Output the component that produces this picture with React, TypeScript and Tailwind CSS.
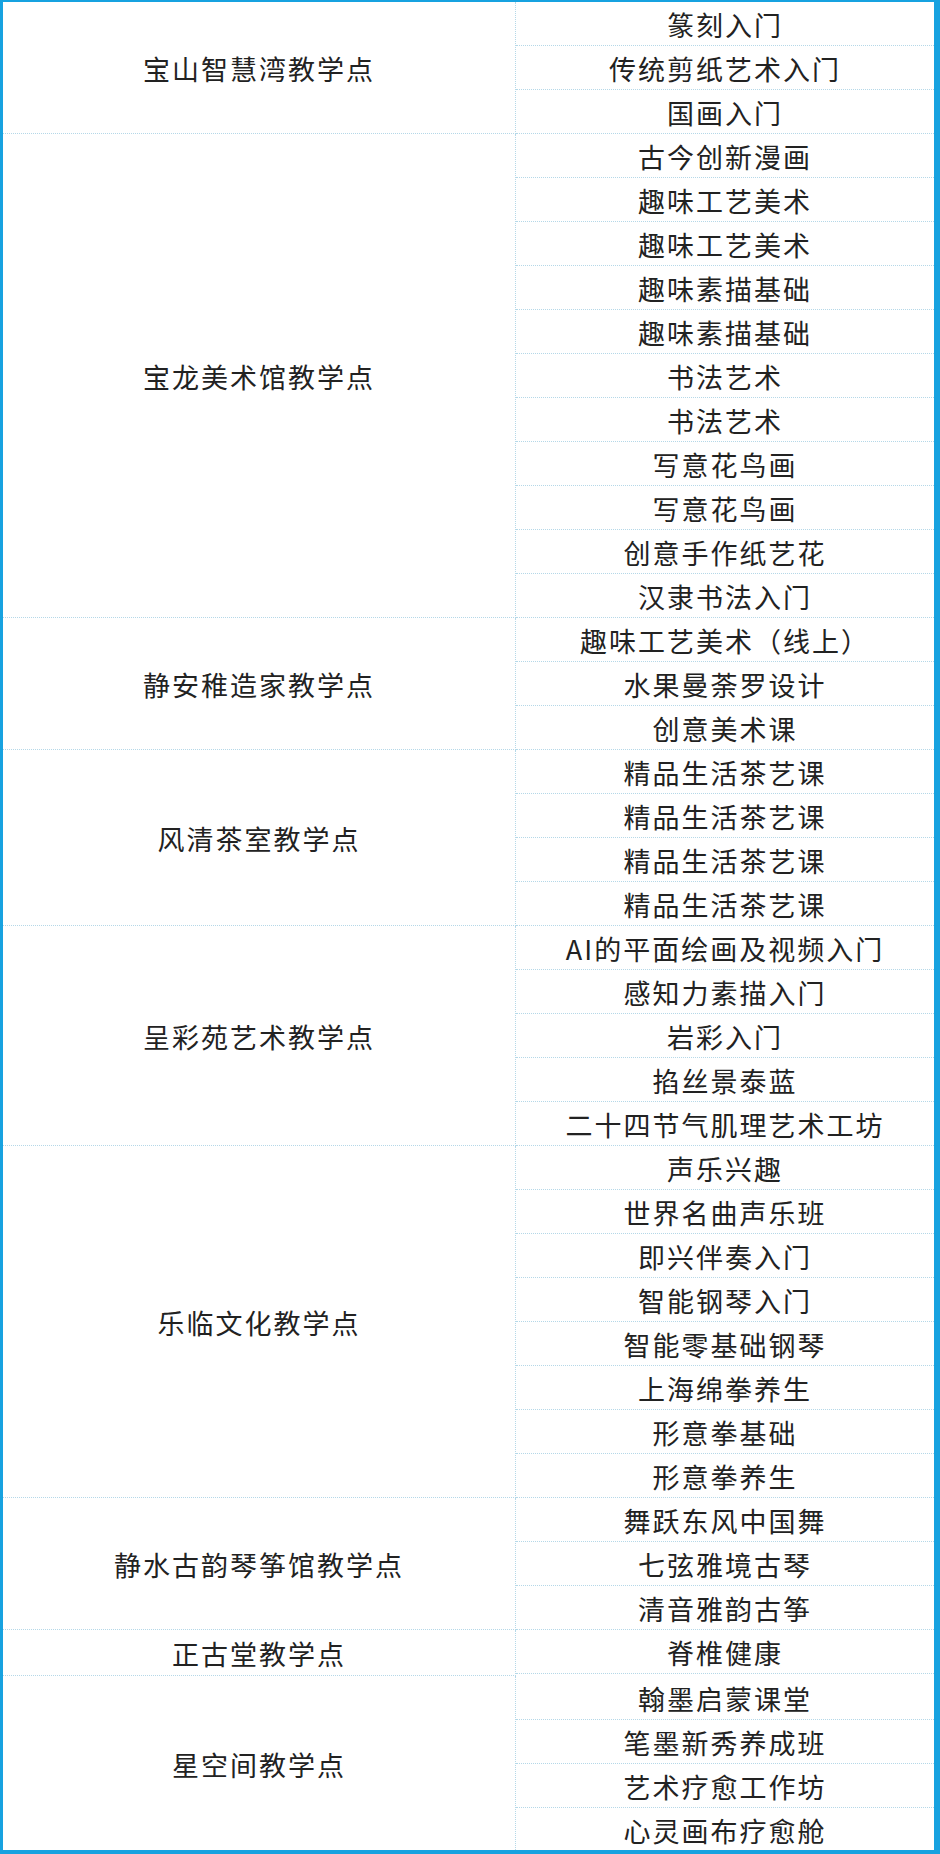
const groups: { site: string; courses: string[] }[] = [
  { site: "宝山智慧湾教学点", courses: ["篆刻入门", "传统剪纸艺术入门", "国画入门"] },
  {
    site: "宝龙美术馆教学点",
    courses: [
      "古今创新漫画",
      "趣味工艺美术",
      "趣味工艺美术",
      "趣味素描基础",
      "趣味素描基础",
      "书法艺术",
      "书法艺术",
      "写意花鸟画",
      "写意花鸟画",
      "创意手作纸艺花",
      "汉隶书法入门",
    ],
  },
  { site: "静安稚造家教学点", courses: ["趣味工艺美术（线上）", "水果曼荼罗设计", "创意美术课"] },
  { site: "风清茶室教学点", courses: ["精品生活茶艺课", "精品生活茶艺课", "精品生活茶艺课", "精品生活茶艺课"] },
  {
    site: "呈彩苑艺术教学点",
    courses: ["AI的平面绘画及视频入门", "感知力素描入门", "岩彩入门", "掐丝景泰蓝", "二十四节气肌理艺术工坊"],
  },
  {
    site: "乐临文化教学点",
    courses: [
      "声乐兴趣",
      "世界名曲声乐班",
      "即兴伴奏入门",
      "智能钢琴入门",
      "智能零基础钢琴",
      "上海绵拳养生",
      "形意拳基础",
      "形意拳养生",
    ],
  },
  { site: "静水古韵琴筝馆教学点", courses: ["舞跃东风中国舞", "七弦雅境古琴", "清音雅韵古筝"] },
  { site: "正古堂教学点", courses: ["脊椎健康"] },
  { site: "星空间教学点", courses: ["翰墨启蒙课堂", "笔墨新秀养成班", "艺术疗愈工作坊", "心灵画布疗愈舱"] },
];

export default function App() {
  return (
    <div
      className="w-[940px] h-[1854px] bg-white border-t-2 border-l-[3px] border-r-[6px] border-b-4 border-[#17a2e0] text-[27px] tracking-[2px] text-[#222] overflow-hidden"
      style={{ fontFamily: '"Noto Sans CJK SC", "Noto Sans", sans-serif' }}
    >
      {groups.map((g, gi) => {
        const lastGroup = gi === groups.length - 1;
        return (
          <div key={gi} className="flex">
            <div
              className={`w-[513px] shrink-0 flex items-center justify-center border-r border-dotted border-[#b5d8e8] pt-1 ${
                lastGroup ? "" : "border-b"
              }`}
            >
              {g.site}
            </div>
            <div className="flex-1">
              {g.courses.map((c, ci) => (
                <div
                  key={ci}
                  className={`h-[44px] flex items-center justify-center pt-1 border-dotted border-[#b5d8e8] ${
                    lastGroup && ci === g.courses.length - 1 ? "" : "border-b"
                  }`}
                >
                  {c}
                </div>
              ))}
            </div>
          </div>
        );
      })}
    </div>
  );
}
